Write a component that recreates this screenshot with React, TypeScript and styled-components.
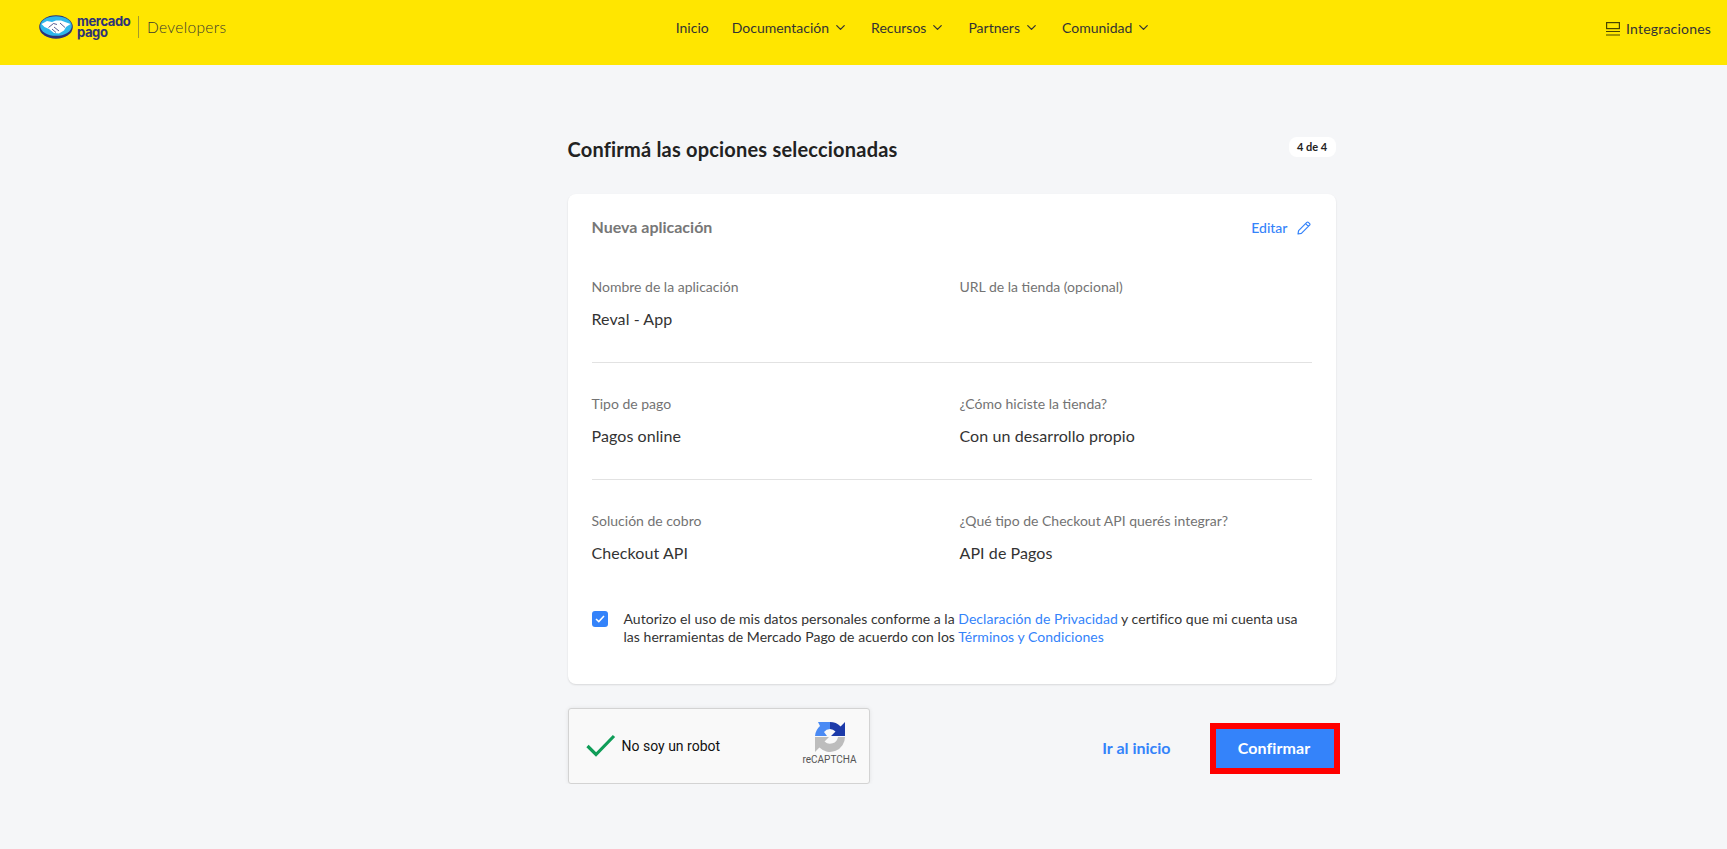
import styled, { createGlobalStyle } from "styled-components";
import { FiChevronDown } from "react-icons/fi";

const GlobalStyle = createGlobalStyle`
  html, body {
    margin: 0;
    padding: 0;
    background: #f5f6f8;
    font-family: "Lato", "Open Sans", sans-serif;
    color: #222;
  }
  * { box-sizing: border-box; }
`;

const navItems = [
  { label: "Inicio", menu: false },
  { label: "Documentación", menu: true },
  { label: "Recursos", menu: true },
  { label: "Partners", menu: true },
  { label: "Comunidad", menu: true },
];

const Logo = () => (
  <svg width="34" height="24" viewBox="0 0 34 24">
    <ellipse cx="17" cy="12" rx="16.8" ry="11.8" fill="#2d3277" />
    <ellipse cx="17" cy="11" rx="15.8" ry="9.8" fill="#2fb6ea" />
    <path d="M2.5 9 L8 6 L13 7 L17 5.5 L22 5.5 L26 7 L31.5 9 L27 12 L25 15.5 L20 18.5 L15 18 L10 14 L5.5 12 Z" fill="#fff" />
    <path d="M9.5 12.5 L14.5 8.5 L18 9.5 M15 12 L20 16 M13 14 L17 17.5 M21 8 L26 12.5" stroke="#2d3277" strokeWidth="0.8" fill="none" />
  </svg>
);

const Captcha = () => (
  <svg width="32" height="32" viewBox="0 0 32 32">
    <path d="M1 15 A15 15 0 0 1 6 5 L4 1 H16 V8 A8 8 0 0 0 10 11 L13 15 Z" fill="#4a8af4" />
    <path d="M16 1 A15 15 0 0 1 26.6 5.4 L31 1 V15 H17 L21.5 10.5 A8 8 0 0 0 16 8 Z" fill="#1c3aa9" />
    <path d="M1 16 H15 L10.5 20.5 A8 8 0 0 0 24 16 H31 A15 15 0 0 1 5.4 26.6 L1 31 Z" fill="#bdbdbd" />
  </svg>
);

export default function App() {
  return (
    <>
      <GlobalStyle />
      <Header>
        <Brand>
          <Logo />
          <BrandName>
            <span>mercado</span>
            <span>pago</span>
          </BrandName>
          <BrandSep />
          <BrandDev>Developers</BrandDev>
        </Brand>
        <Nav>
          {navItems.map((item) => (
            <NavItem key={item.label}>
              {item.label}
              {item.menu && <FiChevronDown size={15} />}
            </NavItem>
          ))}
        </Nav>
        <Integrations>
          <svg width="14" height="14" viewBox="0 0 14 14" fill="none" stroke="#4a4500" strokeWidth="1.2">
            <rect x="0.6" y="0.6" width="12.8" height="6" />
            <path d="M0 9.5 H14 M0 13 H14" />
          </svg>
          Integraciones
        </Integrations>
      </Header>
      <Main>
        <TitleRow>
          <Title>Confirmá las opciones seleccionadas</Title>
          <Steps>4 de 4</Steps>
        </TitleRow>
        <Card>
          <CardHead>
            <CardTitle>Nueva aplicación</CardTitle>
            <EditLink>
              Editar
              <svg width="14" height="14" viewBox="0 0 14 14" fill="none" stroke="#3483fa" strokeWidth="1.2" strokeLinejoin="round">
                <path d="M1 13 L1.6 9.6 L9.8 1.4 Q10.6 0.7 11.4 1.4 L12.6 2.6 Q13.3 3.4 12.6 4.2 L4.4 12.4 Z M8.6 2.6 L11.4 5.4" />
              </svg>
            </EditLink>
          </CardHead>
          <Section $first>
            <Field>
              <Label>Nombre de la aplicación</Label>
              <Value>Reval - App</Value>
            </Field>
            <Field>
              <Label>URL de la tienda (opcional)</Label>
            </Field>
          </Section>
          <Section>
            <Field>
              <Label>Tipo de pago</Label>
              <Value>Pagos online</Value>
            </Field>
            <Field>
              <Label>¿Cómo hiciste la tienda?</Label>
              <Value>Con un desarrollo propio</Value>
            </Field>
          </Section>
          <Section $last>
            <Field>
              <Label>Solución de cobro</Label>
              <Value>Checkout API</Value>
            </Field>
            <Field>
              <Label>¿Qué tipo de Checkout API querés integrar?</Label>
              <Value>API de Pagos</Value>
            </Field>
          </Section>
          <Consent>
            <CheckBox>
              <svg width="10" height="8" viewBox="0 0 10 8" fill="none" stroke="#fff" strokeWidth="1.5">
                <path d="M1 4 L3.8 6.6 L9 1" />
              </svg>
            </CheckBox>
            <ConsentText>
              <ConsentLine>
                Autorizo el uso de mis datos personales conforme a la <a>Declaración de Privacidad</a> y certifico que mi cuenta usa
              </ConsentLine>
              <ConsentLine>
                las herramientas de Mercado Pago de acuerdo con los <a>Términos y Condiciones</a>
              </ConsentLine>
            </ConsentText>
          </Consent>
        </Card>
        <Footer>
          <Recaptcha>
            <RobotCheck>
              <svg width="30" height="24" viewBox="0 0 30 24" fill="none" stroke="#0f9d58" strokeWidth="3.2">
                <path d="M1.5 12 L10 20.5 L28 2" />
              </svg>
              <RobotText>No soy un robot</RobotText>
            </RobotCheck>
            <CaptchaBrand>
              <Captcha />
              <small>reCAPTCHA</small>
            </CaptchaBrand>
          </Recaptcha>
          <Actions>
            <HomeLink>Ir al inicio</HomeLink>
            <ConfirmButton>Confirmar</ConfirmButton>
          </Actions>
        </Footer>
      </Main>
    </>
  );
}

const Header = styled.header`
  position: relative;
  height: 65px;
  background: #ffe600;
  display: flex;
  justify-content: center;
`;

const Brand = styled.div`
  position: absolute;
  left: 39px;
  top: 15px;
  display: flex;
  align-items: center;
`;

const BrandName = styled.div`
  display: flex;
  flex-direction: column;
  width: 54px;
  margin-left: 4px;
  font-family: "Inter", sans-serif;
  font-size: 13px;
  line-height: 11px;
  font-weight: 700;
  color: #2d3277;
  letter-spacing: -0.4px;
`;

const BrandSep = styled.div`
  width: 1px;
  height: 22px;
  margin: 0 8px 0 7px;
  background: #a59a2a;
`;

const BrandDev = styled.div`
  font-size: 15.5px;
  font-weight: 300;
  letter-spacing: 0.35px;
  color: #3a3930;
`;

const Nav = styled.nav`
  display: flex;
  gap: 23px;
  padding-top: 19px;
  padding-left: 100px;
`;

const NavItem = styled.div`
  display: flex;
  align-items: flex-start;
  gap: 4px;
  font-size: 14px;
  line-height: 17px;
  color: #333;

  svg {
    margin-top: 1px;
  }
`;

const Integrations = styled.div`
  position: absolute;
  right: 16px;
  top: 20px;
  display: flex;
  align-items: center;
  gap: 6px;
  font-size: 14px;
  line-height: 17px;
  letter-spacing: 0.2px;
  color: #333;
`;

const Main = styled.main`
  width: 768px;
  margin: 0 auto;
  padding-top: 71px;
  position: relative;
  left: 88px;
`;

const TitleRow = styled.div`
  display: flex;
  align-items: flex-start;
  justify-content: space-between;
  height: 58px;
`;

const Title = styled.h1`
  margin: 0;
  font-size: 20px;
  line-height: 26px;
  font-weight: 700;
  letter-spacing: 0.2px;
  color: #222;
`;

const Steps = styled.div`
  width: 47px;
  height: 20px;
  margin-top: 1px;
  border-radius: 8px;
  background: #fff;
  text-align: center;
  font-size: 11px;
  line-height: 20px;
  font-weight: 700;
`;

const Card = styled.section`
  height: 490px;
  padding: 22px 24px;
  border-radius: 8px;
  background: #fff;
  box-shadow: 0 1px 2px rgba(0, 0, 0, 0.12);
`;

const CardHead = styled.div`
  display: flex;
  justify-content: space-between;
  align-items: center;
  height: 20px;
`;

const CardTitle = styled.div`
  font-size: 16px;
  font-weight: 700;
  color: #777;
`;

const EditLink = styled.div`
  display: flex;
  align-items: center;
  gap: 9px;
  margin: 3px 1px 0 0;
  font-size: 14px;
  font-weight: 500;
  color: #3483fa;
`;

const Section = styled.div<{ $first?: boolean; $last?: boolean }>`
  display: grid;
  grid-template-columns: 368px 1fr;
  height: ${(p) => (p.$first ? "127px" : p.$last ? "126px" : "117px")};
  padding-top: ${(p) => (p.$first ? "42px" : "32px")};
  border-bottom: ${(p) => (p.$last ? "none" : "1px solid #e2e2e2")};
`;

const Field = styled.div`
  display: flex;
  flex-direction: column;
  gap: 13px;
`;

const Label = styled.div`
  font-size: 14px;
  line-height: 18px;
  color: #737373;
`;

const Value = styled.div`
  font-size: 16px;
  line-height: 20px;
  letter-spacing: 0.08px;
  color: #333;
`;

const Consent = styled.div`
  display: flex;
  gap: 16px;
  margin-top: 3px;
`;

const CheckBox = styled.div`
  flex: none;
  width: 16px;
  height: 16px;
  margin-top: 2px;
  border-radius: 3px;
  background: #3483fa;
  display: flex;
  align-items: center;
  justify-content: center;
`;

const ConsentText = styled.div`
  margin-top: 1px;
  font-size: 14px;
  letter-spacing: 0.04px;
  color: #333;

  a {
    color: #3483fa;
  }
`;

const ConsentLine = styled.p`
  margin: 0;
  line-height: 18px;
  white-space: nowrap;
`;

const Footer = styled.div`
  display: flex;
  justify-content: space-between;
  margin-top: 24px;
`;

const Recaptcha = styled.div`
  width: 302px;
  height: 76px;
  display: flex;
  align-items: center;
  justify-content: space-between;
  padding: 0 12px 0 17px;
  background: #f9f9f9;
  border: 1px solid #d3d3d3;
  border-radius: 3px;
  box-shadow: 0 0 4px rgba(0, 0, 0, 0.08);
`;

const RobotCheck = styled.div`
  display: flex;
  align-items: center;
  gap: 6px;
`;

const RobotText = styled.span`
  font-family: Roboto, sans-serif;
  font-size: 14px;
  color: #111;
`;

const CaptchaBrand = styled.div`
  display: flex;
  flex-direction: column;
  align-items: center;
  gap: 1px;
  margin-top: -7px;
  font-family: Roboto, sans-serif;
  color: #555;

  svg {
    margin-left: 2px;
  }

  small {
    font-size: 10px;
  }
`;

const Actions = styled.div`
  display: flex;
  align-items: center;
  gap: 40px;
  margin-right: -4px;
  margin-top: 15px;
  height: 51px;
`;

const HomeLink = styled.div`
  margin: 0 -1px 3px 0;
  font-size: 16px;
  font-weight: 700;
  color: #3483fa;
`;

const ConfirmButton = styled.button`
  width: 130px;
  height: 51px;
  border: 6px solid #ff0000;
  padding: 0 1px 3px 0;
  background: #3483fa;
  color: #fff;
  font-family: inherit;
  font-size: 16px;
  letter-spacing: 0.1px;
  font-weight: 700;
`;
